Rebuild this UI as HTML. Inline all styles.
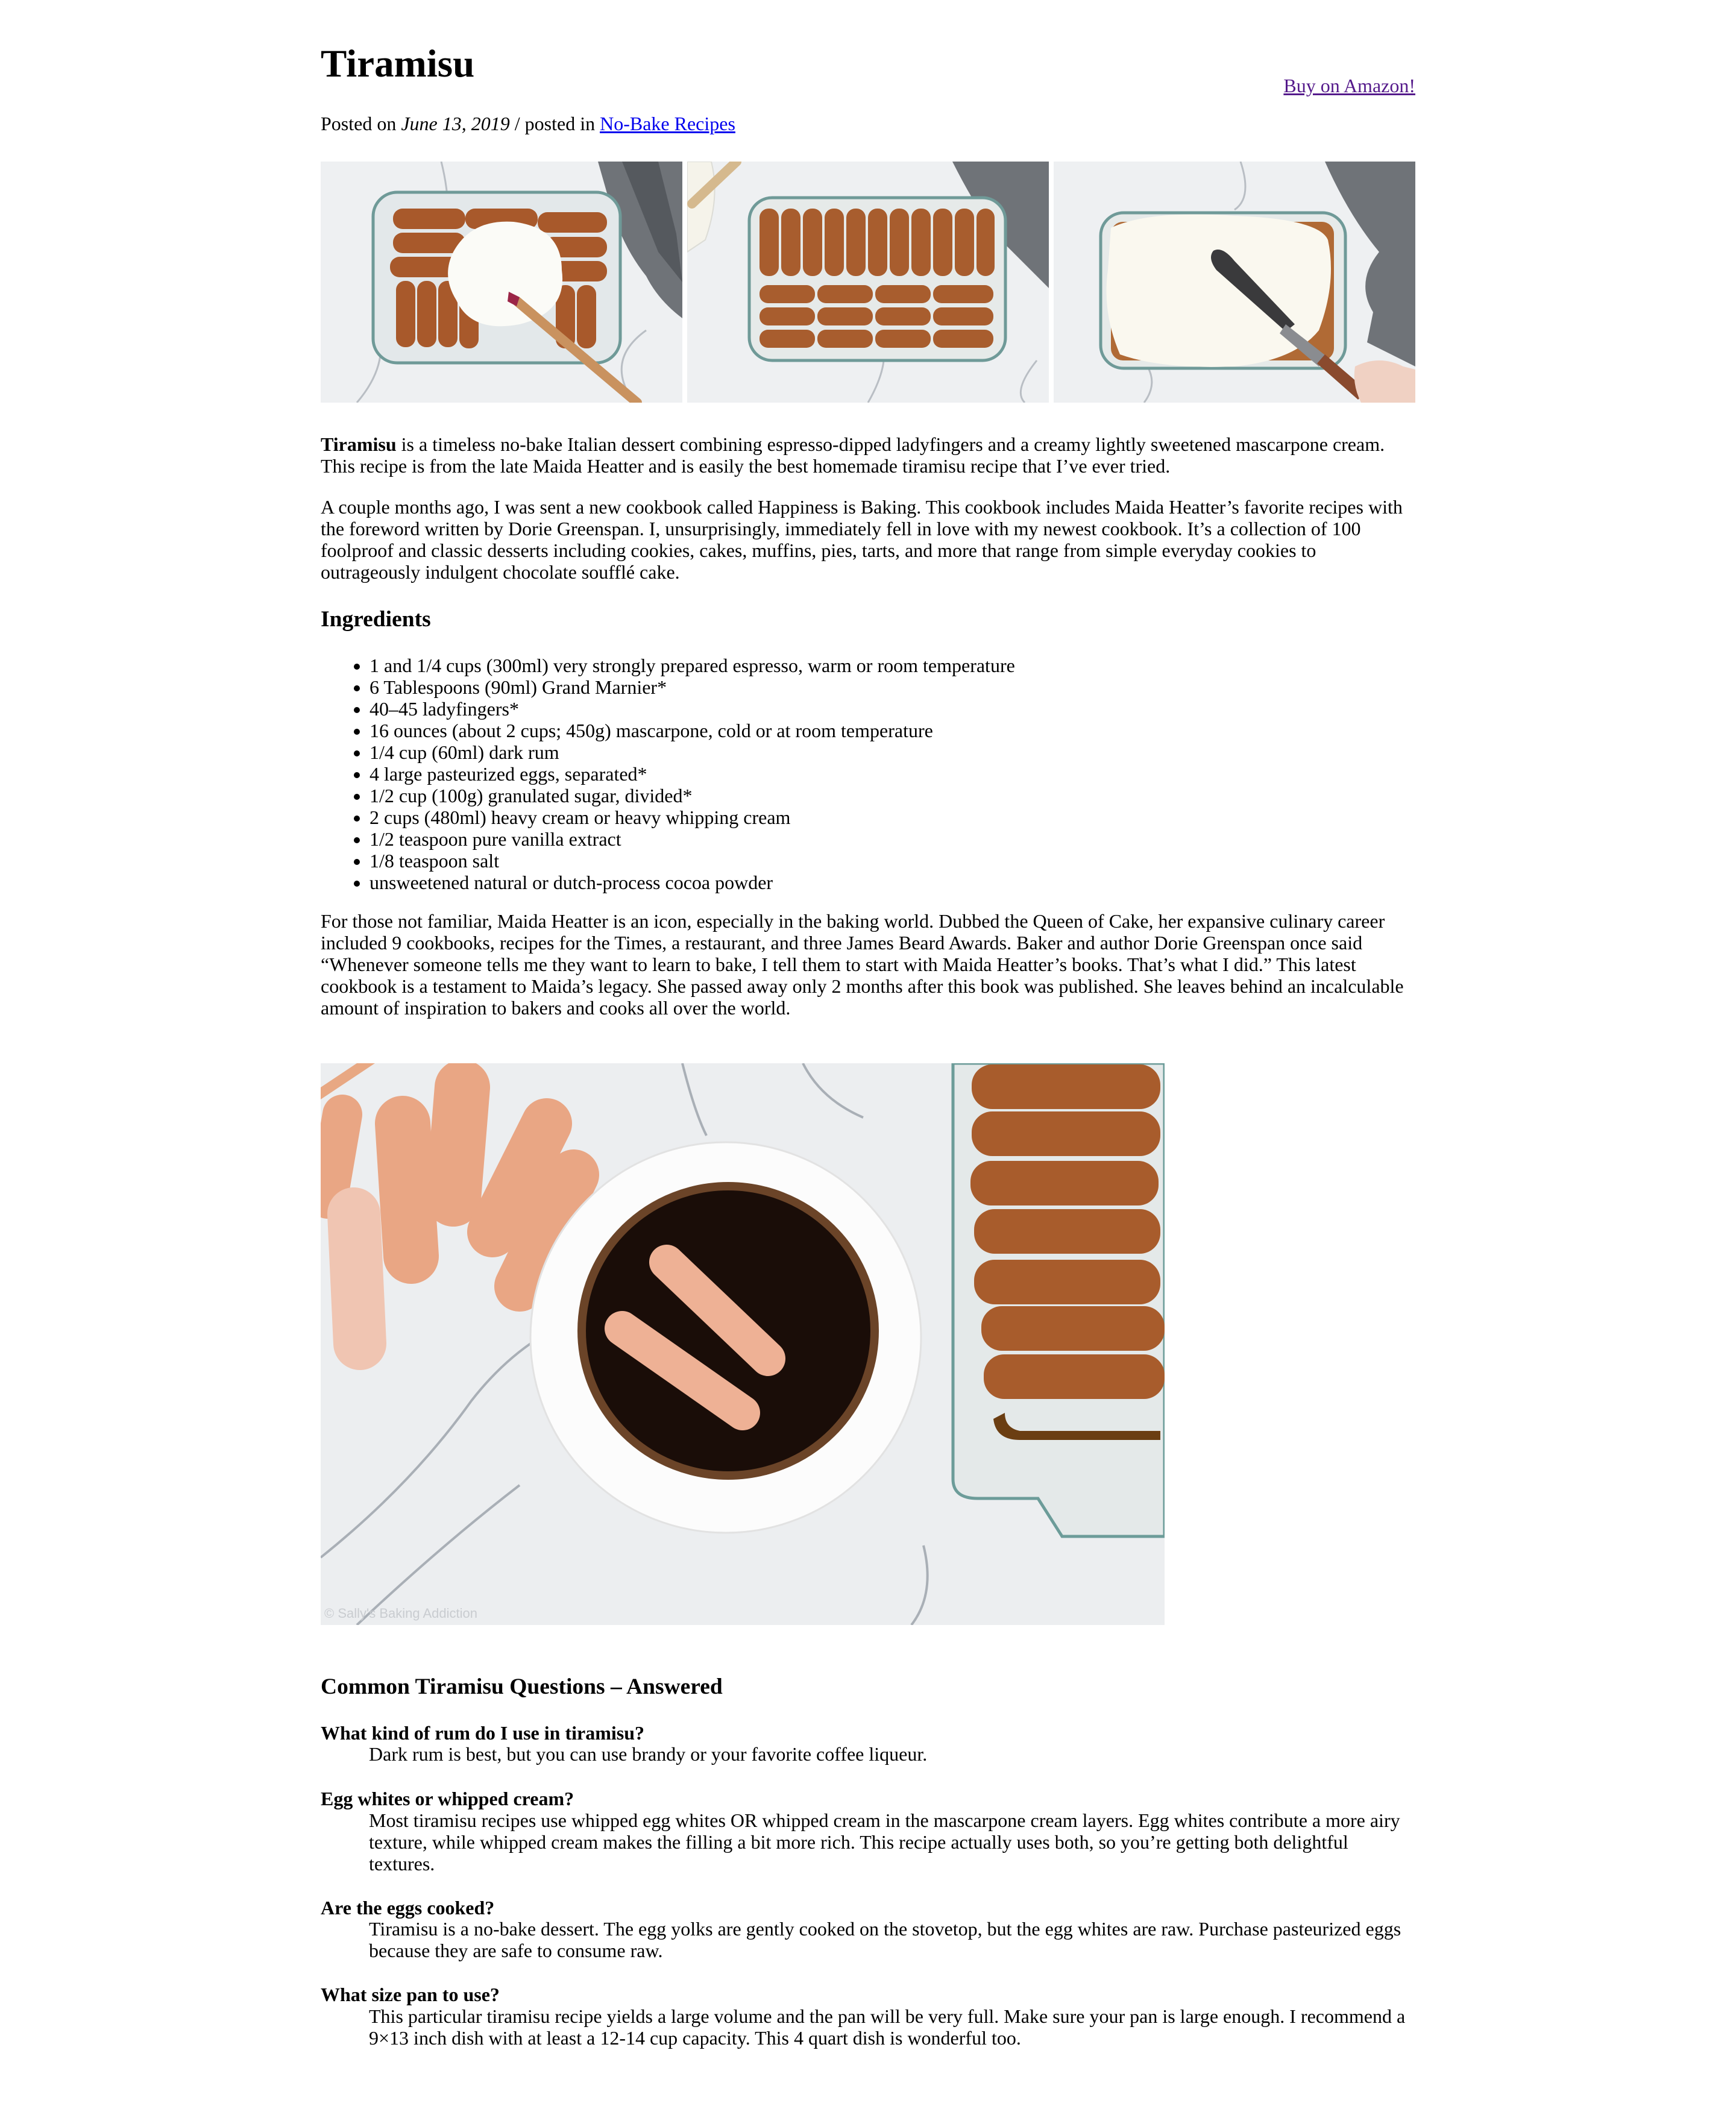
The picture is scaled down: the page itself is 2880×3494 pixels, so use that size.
<!DOCTYPE html>
<html><head><meta charset="utf-8">
<style>
html,body{margin:0;padding:0;background:#fff;}
body{width:2880px;height:3494px;position:relative;overflow:hidden;font-family:"Liberation Serif","Times New Roman",serif;font-size:32px;line-height:36px;color:#000;}
.b{position:absolute;left:532px;white-space:nowrap;}
h1{position:absolute;left:532px;top:69px;margin:0;font-size:65px;line-height:75px;font-weight:bold;}
h3{position:absolute;left:532px;margin:0;font-size:37.5px;line-height:42px;font-weight:bold;}
a{color:#0000ee;}
.buy{position:absolute;right:532px;top:124px;color:#551a8b;}
ul{position:absolute;left:532px;top:1086px;margin:0;padding:0 0 0 81px;white-space:nowrap;}
.dd{left:612px;}
.dt{font-weight:bold;}
svg{position:absolute;display:block;}
</style></head><body>
<h1>Tiramisu</h1>
<a class="buy" href="#">Buy on Amazon!</a>
<div class="b" style="top:187px">Posted on <i>June 13, 2019</i> / posted in <a href="#">No-Bake Recipes</a></div>

<!-- image 1 -->
<svg style="left:532px;top:268px" width="600" height="400" viewBox="0 0 600 400">
<rect width="600" height="400" fill="#eef0f2"/>
<path d="M200 0 Q230 120 180 200 M60 400 Q120 330 90 260 M520 400 Q470 330 540 280" stroke="#b9bec4" stroke-width="3" fill="none"/>
<path d="M460 0 L600 0 L600 260 Q560 230 540 190 Q500 140 480 70 Z" fill="#6f7378"/>
<path d="M500 0 L560 0 L590 120 L600 200 L560 150 Z" fill="#55595e"/>
<rect x="87" y="51" width="410" height="283" rx="40" fill="#e3e8ea" stroke="#6f9a98" stroke-width="5"/>
<g fill="#a8592b">
<rect x="120" y="78" width="120" height="34" rx="16"/><rect x="240" y="78" width="120" height="34" rx="16"/><rect x="360" y="84" width="115" height="34" rx="16"/>
<rect x="120" y="118" width="120" height="34" rx="16"/><rect x="370" y="125" width="105" height="34" rx="16"/>
<rect x="115" y="158" width="125" height="34" rx="16"/><rect x="370" y="165" width="105" height="34" rx="16"/>
<rect x="125" y="198" width="32" height="110" rx="15"/><rect x="160" y="198" width="32" height="110" rx="15"/><rect x="195" y="198" width="32" height="110" rx="15"/><rect x="230" y="210" width="32" height="100" rx="15"/><rect x="390" y="205" width="32" height="105" rx="15"/><rect x="425" y="205" width="32" height="105" rx="15"/>
</g>
<path d="M220 150 Q250 95 320 100 Q400 110 400 180 Q410 250 330 270 Q250 285 225 230 Q200 190 220 150Z" fill="#fbfbf7"/>
<line x1="326" y1="232" x2="525" y2="400" stroke="#c9925f" stroke-width="16" stroke-linecap="round"/>
<path d="M312 216 L330 225 L325 240 L310 232Z" fill="#9b2547"/>
</svg>

<!-- image 2 -->
<svg style="left:1140px;top:268px" width="600" height="400" viewBox="0 0 600 400">
<rect width="600" height="400" fill="#eef0f2"/>
<path d="M300 400 Q340 330 320 290 M580 330 Q540 380 560 400" stroke="#b9bec4" stroke-width="3" fill="none"/>
<path d="M0 0 L40 0 Q55 60 30 130 L0 150Z" fill="#f5f3ea" stroke="#dcdcd6" stroke-width="2"/>
<line x1="82" y1="0" x2="8" y2="70" stroke="#d5b98e" stroke-width="16" stroke-linecap="round"/>
<path d="M440 0 L600 0 L600 210 Q560 170 520 130 Q480 80 440 0Z" fill="#6f7378"/>
<rect x="103" y="60" width="425" height="270" rx="38" fill="#e6eae9" stroke="#6f9a98" stroke-width="5"/>
<g fill="#a85d2e">
<rect x="120" y="78" width="32" height="112" rx="15"/><rect x="156" y="78" width="32" height="112" rx="15"/><rect x="192" y="78" width="32" height="112" rx="15"/><rect x="228" y="78" width="32" height="112" rx="15"/><rect x="264" y="78" width="32" height="112" rx="15"/><rect x="300" y="78" width="32" height="112" rx="15"/><rect x="336" y="78" width="32" height="112" rx="15"/><rect x="372" y="78" width="32" height="112" rx="15"/><rect x="408" y="78" width="32" height="112" rx="15"/><rect x="444" y="78" width="32" height="112" rx="15"/><rect x="480" y="78" width="30" height="112" rx="15"/>
<rect x="120" y="205" width="92" height="30" rx="14"/><rect x="216" y="205" width="92" height="30" rx="14"/><rect x="312" y="205" width="92" height="30" rx="14"/><rect x="408" y="205" width="100" height="30" rx="14"/>
<rect x="120" y="242" width="92" height="30" rx="14"/><rect x="216" y="242" width="92" height="30" rx="14"/><rect x="312" y="242" width="92" height="30" rx="14"/><rect x="408" y="242" width="100" height="30" rx="14"/>
<rect x="120" y="279" width="92" height="30" rx="14"/><rect x="216" y="279" width="92" height="30" rx="14"/><rect x="312" y="279" width="92" height="30" rx="14"/><rect x="408" y="279" width="100" height="30" rx="14"/>
</g>
</svg>

<!-- image 3 -->
<svg style="left:1748px;top:268px" width="600" height="400" viewBox="0 0 600 400">
<rect width="600" height="400" fill="#eef0f2"/>
<path d="M310 0 Q330 60 300 80 M150 400 Q180 360 140 320" stroke="#b9bec4" stroke-width="3" fill="none"/>
<path d="M450 0 L600 0 L600 340 Q560 320 520 300 L530 250 Q500 200 540 150 Q490 90 450 0Z" fill="#6f7378"/>
<rect x="78" y="85" width="406" height="258" rx="38" fill="#e6eae9" stroke="#6f9a98" stroke-width="5"/>
<rect x="95" y="100" width="370" height="230" rx="20" fill="#b06a35"/>
<path d="M95 110 Q160 80 300 90 Q440 95 455 130 Q470 200 440 280 Q400 330 300 340 Q180 345 110 320 Q80 250 90 180Z" fill="#faf8ef"/>
<path d="M265 148 Q280 140 300 165 L400 270 L385 282 L270 180 Q255 160 265 148Z" fill="#3a3a3c"/>
<path d="M385 270 L455 325 L440 340 L375 285Z" fill="#8a8c90"/>
<path d="M450 320 L520 380 L505 395 L437 335Z" fill="#8a4a2e"/>
<path d="M500 340 Q540 320 580 340 L600 345 L600 400 L510 400 Q495 370 500 340Z" fill="#f0d1c3"/>
</svg>

<div class="b" style="top:719px"><b>Tiramisu</b> is a timeless no-bake Italian dessert combining espresso-dipped ladyfingers and a creamy lightly sweetened mascarpone cream.<br>This recipe is from the late Maida Heatter and is easily the best homemade tiramisu recipe that I’ve ever tried.</div>
<div class="b" style="top:823px">A couple months ago, I was sent a new cookbook called Happiness is Baking. This cookbook includes Maida Heatter’s favorite recipes with<br>the foreword written by Dorie Greenspan. I, unsurprisingly, immediately fell in love with my newest cookbook. It’s a collection of 100<br>foolproof and classic desserts including cookies, cakes, muffins, pies, tarts, and more that range from simple everyday cookies to<br>outrageously indulgent chocolate soufflé cake.</div>
<h3 style="top:1007px">Ingredients</h3>
<ul>
<li>1 and 1/4 cups (300ml) very strongly prepared espresso, warm or room temperature</li>
<li>6 Tablespoons (90ml) Grand Marnier*</li>
<li>40–45 ladyfingers*</li>
<li>16 ounces (about 2 cups; 450g) mascarpone, cold or at room temperature</li>
<li>1/4 cup (60ml) dark rum</li>
<li>4 large pasteurized eggs, separated*</li>
<li>1/2 cup (100g) granulated sugar, divided*</li>
<li>2 cups (480ml) heavy cream or heavy whipping cream</li>
<li>1/2 teaspoon pure vanilla extract</li>
<li>1/8 teaspoon salt</li>
<li>unsweetened natural or dutch-process cocoa powder</li>
</ul>
<div class="b" style="top:1510px">For those not familiar, Maida Heatter is an icon, especially in the baking world. Dubbed the Queen of Cake, her expansive culinary career<br>included 9 cookbooks, recipes for the Times, a restaurant, and three James Beard Awards. Baker and author Dorie Greenspan once said<br>“Whenever someone tells me they want to learn to bake, I tell them to start with Maida Heatter’s books. That’s what I did.” This latest<br>cookbook is a testament to Maida’s legacy. She passed away only 2 months after this book was published. She leaves behind an incalculable<br>amount of inspiration to bakers and cooks all over the world.</div>

<!-- big image -->
<svg style="left:532px;top:1764px" width="1400" height="932" viewBox="0 0 1400 932">
<rect width="1400" height="932" fill="#eceef0"/>
<path d="M0 820 Q150 700 250 560 Q320 470 410 430 M60 932 Q200 800 330 700 M600 0 Q620 80 640 120 M800 0 Q830 60 900 90 M1000 800 Q1020 880 980 932" stroke="#a9afb6" stroke-width="4" fill="none"/>
<path d="M0 40 L60 0 L90 0 L0 60Z" fill="#e8a883"/>
<g stroke-linecap="round" fill="none">
<line x1="36" y1="85" x2="12" y2="225" stroke="#e9a684" stroke-width="66"/>
<line x1="136" y1="100" x2="150" y2="320" stroke="#e9a684" stroke-width="92"/>
<line x1="235" y1="40" x2="220" y2="225" stroke="#e9a684" stroke-width="92"/>
<line x1="375" y1="100" x2="285" y2="280" stroke="#e9a684" stroke-width="84"/>
<line x1="420" y1="185" x2="330" y2="370" stroke="#e9a684" stroke-width="84"/>
<line x1="55" y1="250" x2="65" y2="465" stroke="#f0c5b2" stroke-width="88"/>
</g>
<ellipse cx="672" cy="455" rx="324" ry="324" fill="#fcfcfc" stroke="#e2e2e2" stroke-width="3"/>
<ellipse cx="676" cy="444" rx="243" ry="240" fill="#1a0d08"/>
<ellipse cx="676" cy="444" rx="243" ry="240" fill="none" stroke="#6b4428" stroke-width="14"/>
<g stroke-linecap="round" fill="none" stroke="#eeb195" stroke-width="58">
<line x1="574" y1="330" x2="742" y2="490"/>
<line x1="500" y1="440" x2="700" y2="580"/>
</g>
<path d="M1049 0 L1049 690 Q1049 722 1090 722 L1190 722 L1230 785 L1400 785 L1400 0Z" fill="#e4e9e9" stroke="#6c9c99" stroke-width="5"/>
<g fill="#a85c2c">
<rect x="1080" y="2" width="313" height="74" rx="34"/>
<rect x="1080" y="80" width="313" height="74" rx="34"/>
<rect x="1078" y="162" width="312" height="74" rx="34"/>
<rect x="1084" y="242" width="309" height="74" rx="34"/>
<rect x="1084" y="326" width="309" height="74" rx="34"/>
<rect x="1096" y="403" width="304" height="74" rx="34"/>
<rect x="1100" y="483" width="300" height="74" rx="34"/>
</g>
<path d="M1116 590 Q1120 625 1160 625 L1393 625 L1393 610 L1160 610 Q1135 605 1135 580Z" fill="#6b3e12"/>
<text x="6" y="920" font-family="Liberation Sans, sans-serif" font-size="22" fill="#c9ccd0">© Sally's Baking Addiction</text>
</svg>

<h3 style="top:2778px">Common Tiramisu Questions – Answered</h3>
<div class="b dt" style="top:2857px">What kind of rum do I use in tiramisu?</div>
<div class="b dd" style="top:2892px">Dark rum is best, but you can use brandy or your favorite coffee liqueur.</div>
<div class="b dt" style="top:2966px">Egg whites or whipped cream?</div>
<div class="b dd" style="top:3002px">Most tiramisu recipes use whipped egg whites OR whipped cream in the mascarpone cream layers. Egg whites contribute a more airy<br>texture, while whipped cream makes the filling a bit more rich. This recipe actually uses both, so you’re getting both delightful<br>textures.</div>
<div class="b dt" style="top:3147px">Are the eggs cooked?</div>
<div class="b dd" style="top:3182px">Tiramisu is a no-bake dessert. The egg yolks are gently cooked on the stovetop, but the egg whites are raw. Purchase pasteurized eggs<br>because they are safe to consume raw.</div>
<div class="b dt" style="top:3291px">What size pan to use?</div>
<div class="b dd" style="top:3327px">This particular tiramisu recipe yields a large volume and the pan will be very full. Make sure your pan is large enough. I recommend a<br>9×13 inch dish with at least a 12-14 cup capacity. This 4 quart dish is wonderful too.</div>
</body></html>
